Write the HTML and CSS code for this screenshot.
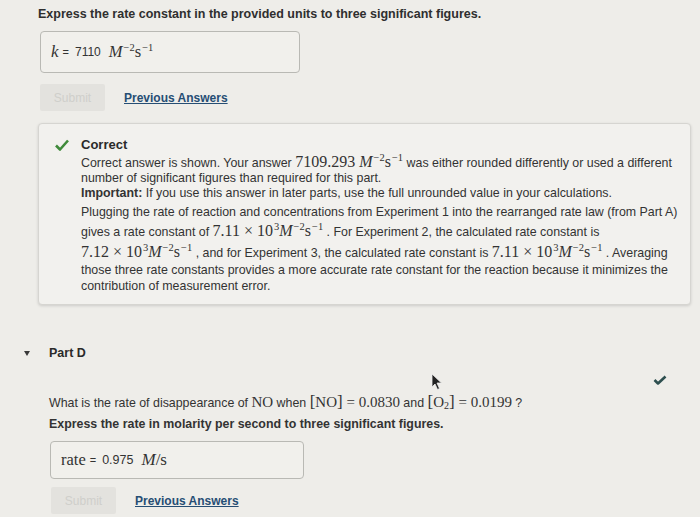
FILE: index.html
```html
<!DOCTYPE html>
<html>
<head>
  <title>Part C / Part D</title>
  <link rel="stylesheet" href="styles.css">
</head>
<body>
  <div class="page">
    <h2 class="prompt">Express the rate constant in the provided units to three significant figures.</h2>

    <div class="answer-box wide">
      <span class="m var">k</span><span class="eq">=</span><span class="value">7110</span>
      <span class="m unit"><i>M</i><sup>&minus;2</sup>s<sup>&minus;1</sup></span>
    </div>

    <div class="actions">
      <button class="submit" disabled>Submit</button>
      <a class="prev" href="#">Previous Answers</a>
    </div>

    <div class="feedback">
      <div class="fb-head">
        <svg class="fb-check" width="14" height="12" viewBox="0 0 14 12">
          <path d="M1 6.5 L5 10.5 L13 1.5" fill="none" stroke="#3f8a3a" stroke-width="2.6" stroke-linejoin="round"/>
        </svg>
        <div class="fb-title">Correct</div>
      </div>
      <div class="fb-body">
        <p class="note">Correct answer is shown. Your answer <span class="m">7109.293 <i>M</i><sup>&minus;2</sup>s<sup>&minus;1</sup></span> was either rounded differently or used a different number of significant figures than required for this part.<br>
        <b>Important:</b> If you use this answer in later parts, use the full unrounded value in your calculations.</p>
        <p class="explain">Plugging the rate of reaction and concentrations from Experiment 1 into the rearranged rate law (from Part A) gives a rate constant of <span class="m">7.11 &times; 10<sup>3</sup><i>M</i><sup>&minus;2</sup>s<sup>&minus;1</sup></span> . For Experiment 2, the calculated rate constant is <span class="m">7.12 &times; 10<sup>3</sup><i>M</i><sup>&minus;2</sup>s<sup>&minus;1</sup></span> , and for Experiment 3, the calculated rate constant is <span class="m">7.11 &times; 10<sup>3</sup><i>M</i><sup>&minus;2</sup>s<sup>&minus;1</sup></span> . Averaging those three rate constants provides a more accurate rate constant for the reaction because it minimizes the contribution of measurement error.</p>
      </div>
    </div>

    <div class="part">
      <div class="part-head">
        <svg class="caret" width="6" height="5" viewBox="0 0 6 5">
          <path d="M0 0 L6 0 L3 5 Z" fill="#3a3a3a"/>
        </svg>
        <span class="part-title">Part D</span>
      </div>
      <div class="part-done">
        <svg width="14" height="10" viewBox="0 0 14 10">
          <path d="M1.5 5 L5 8.5 L12.5 1.5" fill="none" stroke="#2d4f4f" stroke-width="2.6" stroke-linejoin="round"/>
        </svg>
      </div>
      <svg class="cursor" width="12" height="18" viewBox="0 0 12 18">
        <path d="M1 1 L1 14 L4 11 L6.5 16.5 L8.5 15.5 L6 10 L10.5 10 Z" fill="#222" stroke="#eee" stroke-width="0.8"/>
      </svg>

      <div class="part-body">
        <p class="question">What is the rate of disappearance of <span class="m big">NO</span> when <span class="m big"><span class="br">[</span>NO<span class="br">]</span> = 0.0830</span> and <span class="m big"><span class="br">[</span>O<sub>2</sub><span class="br">]</span> = 0.0199</span> ?</p>
        <p class="instruct">Express the rate in molarity per second to three significant figures.</p>

        <div class="answer-box narrow">
          <span class="m var-up">rate</span><span class="eq">=</span><span class="value">0.975</span>
          <span class="m unit"><i>M</i>/s</span>
        </div>

        <div class="actions low">
          <button class="submit" disabled>Submit</button>
          <a class="prev" href="#">Previous Answers</a>
        </div>
      </div>
    </div>
  </div>
</body>
</html>
```

FILE: styles.css
```css
body { margin: 0; background: #eeede9; font-family: "Liberation Sans", Arial, sans-serif; color: #333; font-size: 12.4px; }
.page { padding: 7px 0 0 38px; width: 654px; position: relative; }
.prompt { font-size: 12.5px; font-weight: bold; margin: 0 0 10px 0; color: #2f2f2f; }

.answer-box { border: 1px solid #b9b9b4; border-radius: 4px; background: #f1f0ec; display: flex; align-items: center; box-sizing: border-box; padding-left: 10px; }
.answer-box.wide { width: 260px; height: 42px; margin-left: 2px; }
.answer-box.narrow { width: 254px; height: 38px; margin-left: 1px; }
.m { font-family: "Liberation Serif", "Times New Roman", serif; font-size: 16px; white-space: nowrap; }
.m sup { font-size: 10.5px; vertical-align: 6px; line-height: 0; margin-left: 1px; }
.m sub { font-size: 10px; vertical-align: -2px; line-height: 0; }
.var { font-style: italic; font-size: 17px; }
.var-up { font-size: 16.5px; }
.eq { margin: 0 6px 0 4px; font-size: 11px; }
.value { font-size: 12px; margin-right: 8px; }
.unit { font-size: 16.5px; }
.narrow .value { font-size: 12.5px; }
.narrow .unit { font-size: 17px; }

.actions { display: flex; align-items: center; margin-top: 11px; }
.actions.low { margin-top: 8px; }
.submit { width: 65px; height: 27px; margin-left: 2px; border: none; border-radius: 2px; background: #e3e2de; color: #cfcfcb; font-family: "Liberation Sans", Arial, sans-serif; font-size: 12px; }
.prev { margin-left: 19px; color: #264e74; font-weight: bold; font-size: 12px; text-decoration: underline; }

.feedback { margin-top: 12px; width: 653px; box-sizing: border-box; border: 1px solid #d6d5d1; border-radius: 4px; background: #f2f1ee; box-shadow: 0 1px 3px rgba(0,0,0,0.14); padding: 13px 8px 10px 16px; }
.fb-head { display: flex; align-items: center; }
.fb-check { margin-right: 12px; }
.fb-title { font-weight: bold; font-size: 13px; color: #2a2a2a; }
.fb-body { margin-left: 26px; }
.fb-body p { margin: 0; line-height: 15px; }
.fb-body p.note { margin-top: 2px; }
.fb-body p.note .m { line-height: 15px; }
.fb-body p.explain { margin-top: 3px; line-height: 16px; }
.fb-body p.explain .m { line-height: 21px; }

.part { margin-top: 40px; position: relative; }
.part-head { display: flex; align-items: center; height: 16px; }
.caret { margin: 0 19px 0 -14px; }
.part-title { font-weight: bold; font-size: 12.5px; color: #2a2a2a; }
.part-done { position: absolute; right: 25px; top: 29px; }
.cursor { position: absolute; left: 393px; top: 28px; }
.part-body { margin-left: 11px; padding-top: 31px; }
.question { margin: 0; }
.m.big { font-size: 15px; }
.br { font-size: 17px; }
.instruct { font-weight: bold; margin: 5px 0 10px 0; }
```
